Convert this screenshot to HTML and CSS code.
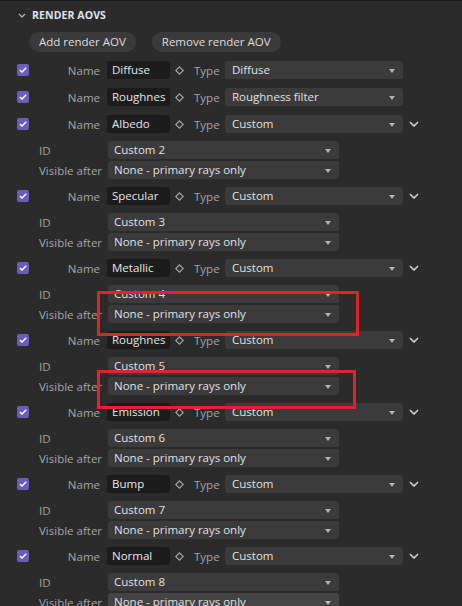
FILE: index.html
```html
<!DOCTYPE html>
<html>
<head>
<meta charset="utf-8">
<link rel="stylesheet" href="styles.css">
</head>
<body>
<div class="panel">
  <div class="header">
    <svg class="hdr-chev" width="8" height="5" viewBox="0 0 8 5"><path d="M1 1 L4 4 L7 1" fill="none" stroke="#b8bcc4" stroke-width="1.2"/></svg>
    <span class="hdr-title">RENDER AOVS</span>
  </div>
  <div class="buttons">
    <button class="btn">Add render AOV</button>
    <button class="btn">Remove render AOV</button>
  </div>

  <div class="list">
    <div class="block">
      <div class="row">
        <span class="check"><svg width="8" height="6" viewBox="0 0 8 6"><path d="M0.8 3 L3 5 L7.2 0.8" fill="none" stroke="#fff" stroke-width="1.4"/></svg></span>
        <span class="lbl">Name</span>
        <span class="input">Diffuse</span>
        <svg class="diamond" width="9" height="9" viewBox="0 0 9 9"><path d="M4.5 0.8 L8.2 4.5 L4.5 8.2 L0.8 4.5 Z" fill="none" stroke="#a8a8a8" stroke-width="1.1"/></svg>
        <span class="tlbl">Type</span>
        <span class="dd type">Diffuse<i class="arrow"></i></span>
      </div>
    </div>

    <div class="block">
      <div class="row">
        <span class="check"><svg width="8" height="6" viewBox="0 0 8 6"><path d="M0.8 3 L3 5 L7.2 0.8" fill="none" stroke="#fff" stroke-width="1.4"/></svg></span>
        <span class="lbl">Name</span>
        <span class="input">Roughnes</span>
        <svg class="diamond" width="9" height="9" viewBox="0 0 9 9"><path d="M4.5 0.8 L8.2 4.5 L4.5 8.2 L0.8 4.5 Z" fill="none" stroke="#a8a8a8" stroke-width="1.1"/></svg>
        <span class="tlbl">Type</span>
        <span class="dd type">Roughness filter<i class="arrow"></i></span>
      </div>
    </div>

    <div class="block custom">
      <div class="row">
        <span class="check"><svg width="8" height="6" viewBox="0 0 8 6"><path d="M0.8 3 L3 5 L7.2 0.8" fill="none" stroke="#fff" stroke-width="1.4"/></svg></span>
        <span class="lbl">Name</span>
        <span class="input">Albedo</span>
        <svg class="diamond" width="9" height="9" viewBox="0 0 9 9"><path d="M4.5 0.8 L8.2 4.5 L4.5 8.2 L0.8 4.5 Z" fill="none" stroke="#a8a8a8" stroke-width="1.1"/></svg>
        <span class="tlbl">Type</span>
        <span class="dd type">Custom<i class="arrow"></i></span>
        <svg class="chev" width="10" height="6" viewBox="0 0 10 6"><path d="M1 1 L5 5 L9 1" fill="none" stroke="#d0d0d0" stroke-width="1.6"/></svg>
      </div>
      <div class="sub"><span class="slbl">ID</span><span class="dd wide">Custom 2<i class="arrow"></i></span></div>
      <div class="sub tight"><span class="slbl">Visible after</span><span class="dd wide">None - primary rays only<i class="arrow"></i></span></div>
    </div>

    <div class="block custom">
      <div class="row">
        <span class="check"><svg width="8" height="6" viewBox="0 0 8 6"><path d="M0.8 3 L3 5 L7.2 0.8" fill="none" stroke="#fff" stroke-width="1.4"/></svg></span>
        <span class="lbl">Name</span>
        <span class="input">Specular</span>
        <svg class="diamond" width="9" height="9" viewBox="0 0 9 9"><path d="M4.5 0.8 L8.2 4.5 L4.5 8.2 L0.8 4.5 Z" fill="none" stroke="#a8a8a8" stroke-width="1.1"/></svg>
        <span class="tlbl">Type</span>
        <span class="dd type">Custom<i class="arrow"></i></span>
        <svg class="chev" width="10" height="6" viewBox="0 0 10 6"><path d="M1 1 L5 5 L9 1" fill="none" stroke="#d0d0d0" stroke-width="1.6"/></svg>
      </div>
      <div class="sub"><span class="slbl">ID</span><span class="dd wide">Custom 3<i class="arrow"></i></span></div>
      <div class="sub tight"><span class="slbl">Visible after</span><span class="dd wide">None - primary rays only<i class="arrow"></i></span></div>
    </div>

    <div class="block custom">
      <div class="row">
        <span class="check"><svg width="8" height="6" viewBox="0 0 8 6"><path d="M0.8 3 L3 5 L7.2 0.8" fill="none" stroke="#fff" stroke-width="1.4"/></svg></span>
        <span class="lbl">Name</span>
        <span class="input">Metallic</span>
        <svg class="diamond" width="9" height="9" viewBox="0 0 9 9"><path d="M4.5 0.8 L8.2 4.5 L4.5 8.2 L0.8 4.5 Z" fill="none" stroke="#a8a8a8" stroke-width="1.1"/></svg>
        <span class="tlbl">Type</span>
        <span class="dd type">Custom<i class="arrow"></i></span>
        <svg class="chev" width="10" height="6" viewBox="0 0 10 6"><path d="M1 1 L5 5 L9 1" fill="none" stroke="#d0d0d0" stroke-width="1.6"/></svg>
      </div>
      <div class="sub"><span class="slbl">ID</span><span class="dd wide">Custom 4<i class="arrow"></i></span></div>
      <div class="sub tight"><span class="slbl">Visible after</span><span class="dd wide">None - primary rays only<i class="arrow"></i></span></div>
    </div>

    <div class="block custom">
      <div class="row">
        <span class="check"><svg width="8" height="6" viewBox="0 0 8 6"><path d="M0.8 3 L3 5 L7.2 0.8" fill="none" stroke="#fff" stroke-width="1.4"/></svg></span>
        <span class="lbl">Name</span>
        <span class="input">Roughnes</span>
        <svg class="diamond" width="9" height="9" viewBox="0 0 9 9"><path d="M4.5 0.8 L8.2 4.5 L4.5 8.2 L0.8 4.5 Z" fill="none" stroke="#a8a8a8" stroke-width="1.1"/></svg>
        <span class="tlbl">Type</span>
        <span class="dd type">Custom<i class="arrow"></i></span>
        <svg class="chev" width="10" height="6" viewBox="0 0 10 6"><path d="M1 1 L5 5 L9 1" fill="none" stroke="#d0d0d0" stroke-width="1.6"/></svg>
      </div>
      <div class="sub"><span class="slbl">ID</span><span class="dd wide">Custom 5<i class="arrow"></i></span></div>
      <div class="sub tight"><span class="slbl">Visible after</span><span class="dd wide">None - primary rays only<i class="arrow"></i></span></div>
    </div>

    <div class="block custom">
      <div class="row">
        <span class="check"><svg width="8" height="6" viewBox="0 0 8 6"><path d="M0.8 3 L3 5 L7.2 0.8" fill="none" stroke="#fff" stroke-width="1.4"/></svg></span>
        <span class="lbl">Name</span>
        <span class="input">Emission</span>
        <svg class="diamond" width="9" height="9" viewBox="0 0 9 9"><path d="M4.5 0.8 L8.2 4.5 L4.5 8.2 L0.8 4.5 Z" fill="none" stroke="#a8a8a8" stroke-width="1.1"/></svg>
        <span class="tlbl">Type</span>
        <span class="dd type">Custom<i class="arrow"></i></span>
        <svg class="chev" width="10" height="6" viewBox="0 0 10 6"><path d="M1 1 L5 5 L9 1" fill="none" stroke="#d0d0d0" stroke-width="1.6"/></svg>
      </div>
      <div class="sub"><span class="slbl">ID</span><span class="dd wide">Custom 6<i class="arrow"></i></span></div>
      <div class="sub tight"><span class="slbl">Visible after</span><span class="dd wide">None - primary rays only<i class="arrow"></i></span></div>
    </div>

    <div class="block custom">
      <div class="row">
        <span class="check"><svg width="8" height="6" viewBox="0 0 8 6"><path d="M0.8 3 L3 5 L7.2 0.8" fill="none" stroke="#fff" stroke-width="1.4"/></svg></span>
        <span class="lbl">Name</span>
        <span class="input">Bump</span>
        <svg class="diamond" width="9" height="9" viewBox="0 0 9 9"><path d="M4.5 0.8 L8.2 4.5 L4.5 8.2 L0.8 4.5 Z" fill="none" stroke="#a8a8a8" stroke-width="1.1"/></svg>
        <span class="tlbl">Type</span>
        <span class="dd type">Custom<i class="arrow"></i></span>
        <svg class="chev" width="10" height="6" viewBox="0 0 10 6"><path d="M1 1 L5 5 L9 1" fill="none" stroke="#d0d0d0" stroke-width="1.6"/></svg>
      </div>
      <div class="sub"><span class="slbl">ID</span><span class="dd wide">Custom 7<i class="arrow"></i></span></div>
      <div class="sub tight"><span class="slbl">Visible after</span><span class="dd wide">None - primary rays only<i class="arrow"></i></span></div>
    </div>

    <div class="block custom">
      <div class="row">
        <span class="check"><svg width="8" height="6" viewBox="0 0 8 6"><path d="M0.8 3 L3 5 L7.2 0.8" fill="none" stroke="#fff" stroke-width="1.4"/></svg></span>
        <span class="lbl">Name</span>
        <span class="input">Normal</span>
        <svg class="diamond" width="9" height="9" viewBox="0 0 9 9"><path d="M4.5 0.8 L8.2 4.5 L4.5 8.2 L0.8 4.5 Z" fill="none" stroke="#a8a8a8" stroke-width="1.1"/></svg>
        <span class="tlbl">Type</span>
        <span class="dd type">Custom<i class="arrow"></i></span>
        <svg class="chev" width="10" height="6" viewBox="0 0 10 6"><path d="M1 1 L5 5 L9 1" fill="none" stroke="#d0d0d0" stroke-width="1.6"/></svg>
      </div>
      <div class="sub"><span class="slbl">ID</span><span class="dd wide">Custom 8<i class="arrow"></i></span></div>
      <div class="sub tight"><span class="slbl">Visible after</span><span class="dd wide hover">None - primary rays only<i class="arrow"></i></span></div>
    </div>
  </div>

  <div class="mark mark1"></div>
  <div class="mark mark2"></div>
</div>
</body>
</html>
```

FILE: styles.css
```css
html, body {
  margin: 0;
  padding: 0;
  background: #2b2b2b;
  overflow: hidden;
}
body {
  font-family: "Open Sans", "Noto Sans", sans-serif;
  font-size: 11.5px;
  color: #dcdcdc;
}
.panel {
  position: relative;
  height: 606px;
  border-top: 1px solid #1c1c1c;
  box-sizing: border-box;
  padding-top: 7px;
}
.header {
  display: flex;
  align-items: center;
  height: 14px;
  padding-left: 18px;
  gap: 6px;
}
.hdr-title {
  font-size: 10.5px;
  font-weight: 700;
  color: #dfe4ee;
  letter-spacing: 0.1px;
}
.buttons {
  display: flex;
  gap: 16px;
  padding-left: 29px;
  margin-top: 10px;
}
.btn {
  height: 20px;
  border: none;
  border-radius: 10px;
  background: #3a3a3a;
  color: #dedede;
  font-family: inherit;
  font-size: 11.5px;
  padding: 0 10px;
  line-height: 20px;
}
.list {
  margin-top: 9px;
}
.block {
  display: flex;
  flex-direction: column;
  padding-bottom: 9px;
}
.block.custom {
  padding-bottom: 8px;
}
.row {
  display: flex;
  align-items: center;
  height: 18px;
}
.check {
  width: 12px;
  height: 12px;
  margin-left: 17px;
  border-radius: 2px;
  background: #6a5eb8;
  display: flex;
  align-items: center;
  justify-content: center;
}
.lbl {
  width: 71px;
  text-align: right;
  color: #a6a6a6;
}
.input {
  width: 63px;
  height: 18px;
  margin-left: 7px;
  background: #1c1c1c;
  border-radius: 3px;
  padding-left: 5px;
  box-sizing: border-box;
  line-height: 18px;
  color: #e6e6e6;
  white-space: nowrap;
  overflow: hidden;
}
.diamond {
  margin-left: 5px;
}
.tlbl {
  margin-left: 10px;
  width: 31px;
  color: #a6a6a6;
}
.dd {
  position: relative;
  height: 18px;
  background: #3b3b3b;
  border-radius: 3px;
  box-sizing: border-box;
  line-height: 18px;
  color: #e0e0e0;
  white-space: nowrap;
}
.dd.type {
  width: 178px;
  padding-left: 7px;
}
.dd.wide {
  width: 231px;
  padding-left: 6px;
}
.dd.hover {
  background: #444444;
}
.arrow {
  position: absolute;
  right: 8px;
  top: 8px;
  width: 0;
  height: 0;
  border-left: 3.5px solid transparent;
  border-right: 3.5px solid transparent;
  border-top: 4px solid #b4b4b4;
}
.chev {
  margin-left: 6px;
}
.sub {
  display: flex;
  align-items: center;
  height: 18px;
  margin-top: 8px;
}
.sub.tight {
  margin-top: 2px;
}
.slbl {
  width: 69px;
  padding-left: 39px;
  color: #a6a6a6;
  white-space: nowrap;
  overflow: hidden;
}
.mark {
  position: absolute;
  border: 3px solid #e3222b;
  box-sizing: border-box;
}
.mark1 {
  left: 97px;
  top: 290px;
  width: 262px;
  height: 45px;
}
.mark2 {
  left: 97px;
  top: 369px;
  width: 259px;
  height: 39px;
}
```
